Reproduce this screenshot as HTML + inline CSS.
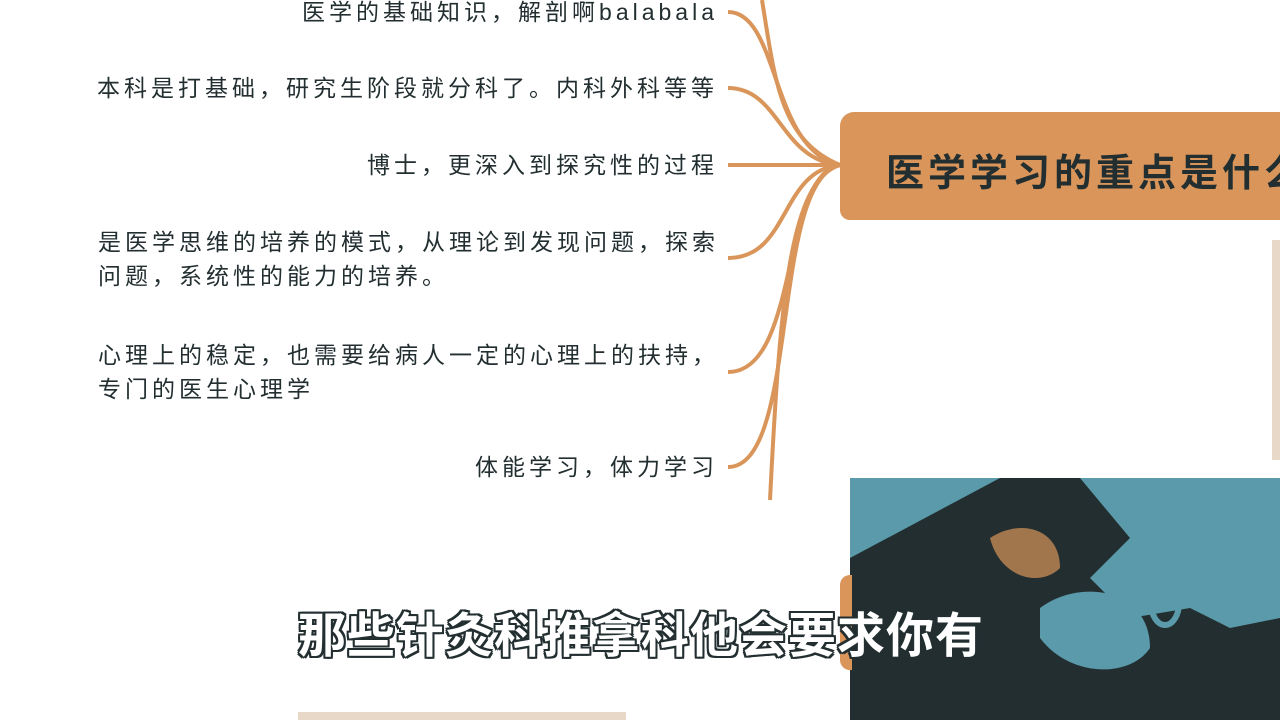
<!DOCTYPE html>
<html><head><meta charset="utf-8"><style>
body{margin:0;width:1280px;height:720px;background:#fff;position:relative;overflow:hidden;font-family:"Liberation Sans","Noto Sans CJK SC",sans-serif}
.t{position:absolute;right:562px;font-size:23px;color:#222e30;letter-spacing:4px;text-align:left;line-height:34px;white-space:nowrap}
.box{position:absolute;left:840px;top:112px;width:440px;height:108px;background:#d9955a;border-radius:14px 0 0 10px}
.box span{position:absolute;left:46px;top:30px;font-size:38px;font-weight:bold;color:#222e30;letter-spacing:4px;white-space:nowrap}
.vid{position:absolute;left:850px;top:478px;width:430px;height:242px;background:#222e30;overflow:hidden}
.sub{position:absolute;left:298px;top:596px;font-size:48px;color:#fff;letter-spacing:1px;white-space:nowrap;font-weight:bold;text-shadow:2px 0 0 #222e30,-2px 0 0 #222e30,0 2px 0 #222e30,0 -2px 0 #222e30,2px 2px 0 #222e30,-2px -2px 0 #222e30,2px -2px 0 #222e30,-2px 2px 0 #222e30}
</style></head><body>
<svg width="1280" height="720" style="position:absolute;left:0;top:0">
<g fill="none" stroke="#d9955a" stroke-width="4">
<path d="M728 12 C780 12 770 150 840 165"/>
<path d="M762 0 C775 80 780 140 840 165"/>
<path d="M728 88 C780 88 780 160 840 165"/>
<path d="M728 165 L840 165"/>
<path d="M728 258 C790 258 780 170 840 165"/>
<path d="M728 372 C800 372 780 175 840 165"/>
<path d="M728 467 C800 467 770 180 840 165"/>
<path d="M770 500 C780 300 790 180 840 165"/>
</g>
</svg>
<div class="t" style="top:-5px">医学的基础知识，解剖啊balabala</div>
<div class="t" style="top:71px">本科是打基础，研究生阶段就分科了。内科外科等等</div>
<div class="t" style="top:148px">博士，更深入到探究性的过程</div>
<div class="t" style="top:225px;left:98px;right:auto">是医学思维的培养的模式，从理论到发现问题，探索<br>问题，系统性的能力的培养。</div>
<div class="t" style="top:338px;left:98px;right:auto">心理上的稳定，也需要给病人一定的心理上的扶持，<br>专门的医生心理学</div>
<div class="t" style="top:450px">体能学习，体力学习</div>
<div class="box"><span>医学学习的重点是什么</span></div>
<div style="position:absolute;left:1272px;top:240px;width:8px;height:220px;background:#e8d8c8"></div>
<div class="vid">
<svg width="430" height="242">
<rect x="0" y="0" width="430" height="90" fill="#5a9aaa"/>
<path d="M0 80 L150 0 L430 0 L430 242 L0 242Z" fill="#222e30"/>
<path d="M230 0 L430 0 L430 140 L380 150 L340 130 L280 140 L240 100 L280 60Z" fill="#5a9aaa"/>
<path d="M190 130 C230 100 300 110 300 170 C280 200 220 200 190 160Z" fill="#5a9aaa"/>
<path d="M140 60 C170 40 210 50 210 90 C190 110 150 100 140 60Z" fill="#d9955a" opacity=".7"/>
<ellipse cx="315" cy="125" rx="14" ry="22" fill="none" stroke="#5a9aaa" stroke-width="6"/>
</svg>
</div>
<div style="position:absolute;left:840px;top:575px;width:12px;height:95px;background:#d9955a;border-radius:10px 0 0 10px"></div>
<div style="position:absolute;left:298px;top:712px;width:328px;height:8px;background:#e8d8c8"></div>
<div class="sub">那些针灸科推拿科他会要求你有</div>
</body></html>
